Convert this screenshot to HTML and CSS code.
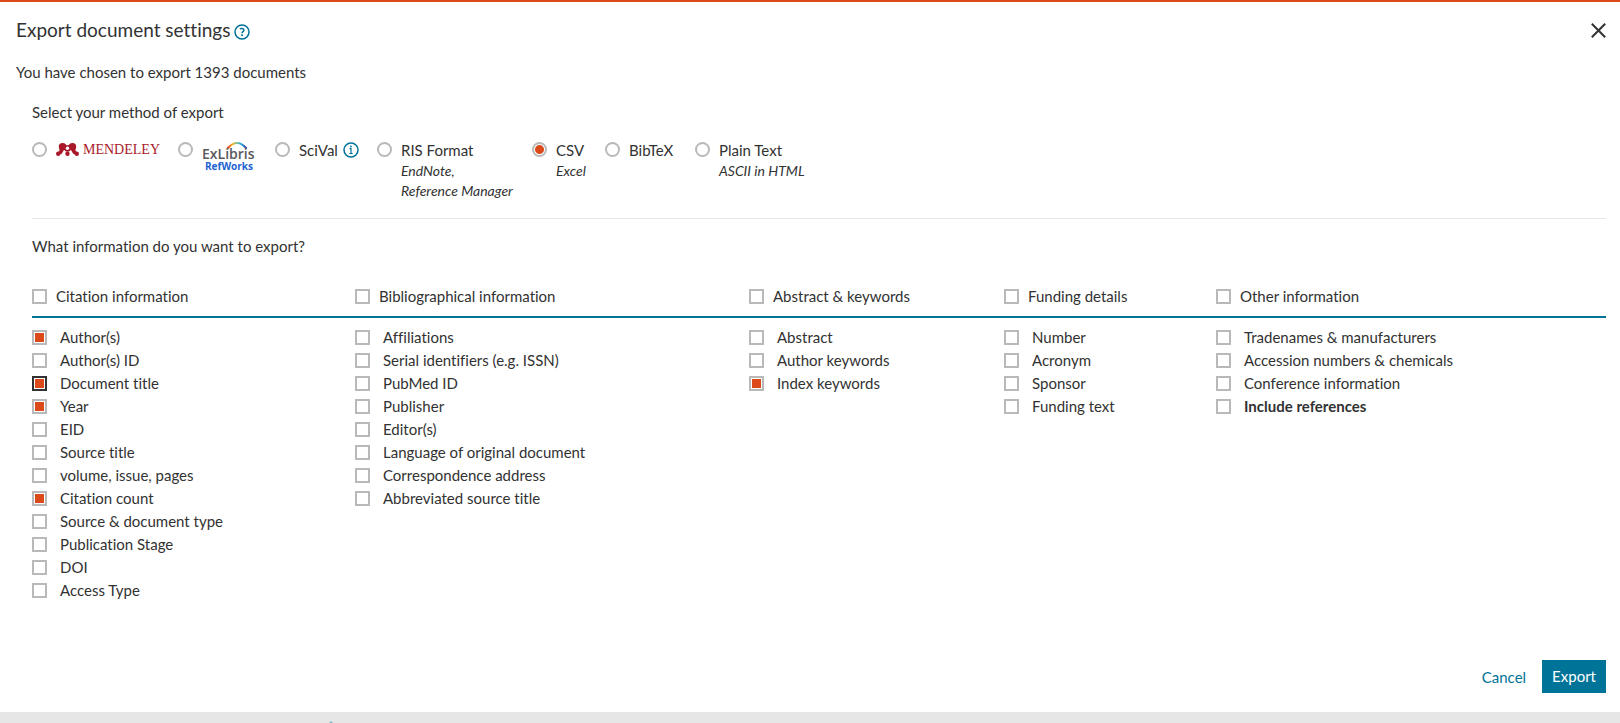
FILE: index.html
```html
<!DOCTYPE html>
<html lang="en">
<head>
<meta charset="utf-8">
<title>Export document settings</title>
<link rel="stylesheet" href="styles.css">
</head>
<body>
<main class="dialog">
  <header class="dialog-head">
    <h1 class="title">Export document settings</h1>
    <button class="icon-btn help" type="button" aria-label="Help">
      <svg width="16" height="16" viewBox="0 0 16 16" fill="none" stroke="#007398"><circle cx="8" cy="8" r="7" stroke-width="1.5"/><path d="M5.9 5.1C6.6 4.3 9.9 4 9.9 6.2C9.9 7.6 8 7.6 8 9.2" stroke-width="1.5"/><circle cx="8" cy="11.2" r="1" fill="#007398" stroke="none"/></svg>
    </button>
    <button class="icon-btn close" type="button" aria-label="Close">
      <svg width="15" height="15" viewBox="0 0 15 15" fill="none" stroke="#323232" stroke-width="2"><path d="M.8 .8L14.200 14.200M14.200 .8L.8 14.200"/></svg>
    </button>
  </header>
  <p class="summary">You have chosen to export 1393 documents</p>

  <div class="panel">
    <h2 class="subtitle">Select your method of export</h2>
    <div class="methods" role="radiogroup" aria-label="Export method">
      <label class="method"><input class="radio" type="radio" name="method" aria-label="Mendeley">
        <svg class="logo" width="104" height="18" viewBox="0 0 104 18"><g fill="#a9192a"><circle cx="6.5" cy="4.700" r="3.700"/><circle cx="16.500" cy="4.700" r="3.700"/><path d="M3 4.500C4.500 8 3 10 1.500 10.500L5 12.500C7 10.500 7.500 8 8 7L15 7C15.500 9 16 10.500 18 12.500L21.500 10.500C20 9.500 18.500 8 20 4.500L15 1.500L11.500 4L8 1.500Z"/><circle cx="11.500" cy="6.500" r="3.200"/><circle cx="2.200" cy="11.800" r="2.200"/><circle cx="11.500" cy="11.800" r="2.200"/><circle cx="20.800" cy="11.800" r="2.200"/></g><circle cx="11.500" cy="6.300" r="1.700" fill="#fff"/><text class="mendeley" x="27" y="12">MENDELEY</text></svg>
      </label>
      <label class="method"><input class="radio" type="radio" name="method" aria-label="ExLibris RefWorks">
        <svg class="logo" width="54" height="30" viewBox="0 0 54 30"><defs><linearGradient id="arc"><stop offset="0" stop-color="#e5352b"/><stop offset=".25" stop-color="#f9b21d"/><stop offset=".5" stop-color="#76c7a0"/><stop offset=".75" stop-color="#2a9fe0"/><stop offset="1" stop-color="#3d3b95"/></linearGradient></defs><path d="M25.500 6.500Q35-4.500 44.500 6.500" fill="none" stroke="url(#arc)" stroke-width="2"/><text class="exlibris" x="0" y="17">ExLibris</text><text class="refworks" x="3" y="28">RefWorks</text></svg>
      </label>
      <label class="method"><input class="radio" type="radio" name="method"><span class="method-text">SciVal</span>
        <svg class="info" width="16" height="16" viewBox="0 0 16 16" fill="none" stroke="#007398"><circle cx="8" cy="8" r="7" stroke-width="1.5"/><path d="M6.500 6.700H8V11.500M6.300 11.500H9.700" stroke-width="1.200"/><circle cx="7.900" cy="4.500" r=".9" fill="#007398" stroke="none"/></svg>
      </label>
      <label class="method"><input class="radio" type="radio" name="method"><span class="method-text">RIS Format<em class="note">EndNote,<br>Reference Manager</em></span></label>
      <label class="method"><input class="radio" type="radio" name="method" checked><span class="method-text">CSV<em class="note">Excel</em></span></label>
      <label class="method"><input class="radio" type="radio" name="method"><span class="method-text">BibTeX</span></label>
      <label class="method"><input class="radio" type="radio" name="method"><span class="method-text">Plain Text<em class="note">ASCII in HTML</em></span></label>
    </div>

    <h2 class="subtitle question">What information do you want to export?</h2>
    <div class="fields">
      <section class="group">
        <label class="group-head"><input class="check" type="checkbox">Citation information</label>
        <ul class="options">
          <li><label class="option"><input class="check" type="checkbox" checked>Author(s)</label></li>
          <li><label class="option"><input class="check" type="checkbox">Author(s) ID</label></li>
          <li><label class="option"><input class="check current" type="checkbox" checked>Document title</label></li>
          <li><label class="option"><input class="check" type="checkbox" checked>Year</label></li>
          <li><label class="option"><input class="check" type="checkbox">EID</label></li>
          <li><label class="option"><input class="check" type="checkbox">Source title</label></li>
          <li><label class="option"><input class="check" type="checkbox">volume, issue, pages</label></li>
          <li><label class="option"><input class="check" type="checkbox" checked>Citation count</label></li>
          <li><label class="option"><input class="check" type="checkbox">Source &amp; document type</label></li>
          <li><label class="option"><input class="check" type="checkbox">Publication Stage</label></li>
          <li><label class="option"><input class="check" type="checkbox">DOI</label></li>
          <li><label class="option"><input class="check" type="checkbox">Access Type</label></li>
        </ul>
      </section>
      <section class="group">
        <label class="group-head"><input class="check" type="checkbox">Bibliographical information</label>
        <ul class="options">
          <li><label class="option"><input class="check" type="checkbox">Affiliations</label></li>
          <li><label class="option"><input class="check" type="checkbox">Serial identifiers (e.g. ISSN)</label></li>
          <li><label class="option"><input class="check" type="checkbox">PubMed ID</label></li>
          <li><label class="option"><input class="check" type="checkbox">Publisher</label></li>
          <li><label class="option"><input class="check" type="checkbox">Editor(s)</label></li>
          <li><label class="option"><input class="check" type="checkbox">Language of original document</label></li>
          <li><label class="option"><input class="check" type="checkbox">Correspondence address</label></li>
          <li><label class="option"><input class="check" type="checkbox">Abbreviated source title</label></li>
        </ul>
      </section>
      <section class="group">
        <label class="group-head"><input class="check" type="checkbox">Abstract &amp; keywords</label>
        <ul class="options">
          <li><label class="option"><input class="check" type="checkbox">Abstract</label></li>
          <li><label class="option"><input class="check" type="checkbox">Author keywords</label></li>
          <li><label class="option"><input class="check" type="checkbox" checked>Index keywords</label></li>
        </ul>
      </section>
      <section class="group">
        <label class="group-head"><input class="check" type="checkbox">Funding details</label>
        <ul class="options">
          <li><label class="option"><input class="check" type="checkbox">Number</label></li>
          <li><label class="option"><input class="check" type="checkbox">Acronym</label></li>
          <li><label class="option"><input class="check" type="checkbox">Sponsor</label></li>
          <li><label class="option"><input class="check" type="checkbox">Funding text</label></li>
        </ul>
      </section>
      <section class="group">
        <label class="group-head"><input class="check" type="checkbox">Other information</label>
        <ul class="options">
          <li><label class="option"><input class="check" type="checkbox">Tradenames &amp; manufacturers</label></li>
          <li><label class="option"><input class="check" type="checkbox">Accession numbers &amp; chemicals</label></li>
          <li><label class="option"><input class="check" type="checkbox">Conference information</label></li>
          <li><label class="option strong"><input class="check" type="checkbox">Include references</label></li>
        </ul>
      </section>
    </div>
  </div>

  <footer class="actions">
    <button class="cancel" type="button">Cancel</button>
    <button class="export" type="button">Export</button>
  </footer>
</main>
<div class="backdrop"><svg width="6" height="11" viewBox="0 0 6 11"><path d="M0 12L3 9L6 12Z" fill="#7fb6c8"/></svg></div>
</body>
</html>
```
FILE: styles.css
```css
* { box-sizing: border-box; }

body {
  margin: 0;
  background: #e6e6e6;
  color: #323232;
  font: 15px/24px Lato, "Open Sans", sans-serif;
  font-variant-ligatures: none;
}

.dialog {
  padding: 14px 14px 19px 16px;
  border-top: 2px solid #dc4a1c;
  background: #fff;
}

.dialog-head { display: flex; align-items: center; gap: 4px; height: 28px; }
.title { margin: 0; font-size: 19px; line-height: 26px; font-weight: 400; }

.icon-btn {
  display: flex;
  padding: 0;
  border: 0;
  background: none;
}
.help { padding-top: 3px; }
.close { margin-left: auto; }

.summary { margin: 16px 0; }
.panel { padding-left: 16px; }
.subtitle { margin: 0; font-size: 15px; line-height: 24px; font-weight: 400; }

.methods {
  display: grid;
  grid-template-columns: 146px 97px 102px 155px 73px 90px auto;
  margin-top: 15px;
  padding-bottom: 17px;
  border-bottom: 1px solid #e6e6e6;
}
.method { display: flex; align-items: flex-start; gap: 9px; white-space: nowrap; }
.method-text { line-height: 22px; }
.logo { margin-top: 3px; flex: none; overflow: visible; }
.info { margin: 3px 0 0 -4px; flex: none; }
.note { display: block; font-size: 14px; line-height: 20px; }

.radio, .check {
  flex: none;
  appearance: none;
  width: 15px;
  height: 15px;
  margin: 0;
  border: 2px solid #b9b9b9;
  background: #fff;
}
.radio { margin-top: 3px; border-radius: 50%; }
.radio:checked { background: radial-gradient(circle, #dc4a1c 4px, #fff 5px); }
.check:checked { padding: 1px; background: #dc4a1c content-box; }
.check.current { border-color: #323232; }

.mendeley { font: 14px "Liberation Serif", serif; fill: #a9192a; }
.exlibris { font: 600 14px "Open Sans", sans-serif; fill: #58595b; }
.refworks { font: 700 10px "Open Sans", sans-serif; fill: #2364d2; }

.question { margin-top: 15px; }

.fields {
  display: grid;
  grid-template-columns: 323fr 394fr 255fr 212fr 390fr;
  margin-top: 26px;
}
.group-head {
  display: flex;
  align-items: center;
  gap: 9px;
  padding-bottom: 8px;
  border-bottom: 2px solid #007398;
}
.options { margin: 8px 0 0; padding: 0; list-style: none; }
.option { display: flex; align-items: center; gap: 13px; line-height: 23px; }
.strong { font-weight: 700; }

.actions {
  display: flex;
  justify-content: flex-end;
  align-items: center;
  gap: 16px;
  margin-top: 58px;
}
.cancel, .export {
  padding: 0;
  border: 0;
  background: none;
  color: #007398;
  font: inherit;
}
.export { padding: 4px 10px 5px; background: #007398; color: #fff; }

.backdrop { display: flex; height: 11px; padding-left: 328px; overflow: hidden; }
```
